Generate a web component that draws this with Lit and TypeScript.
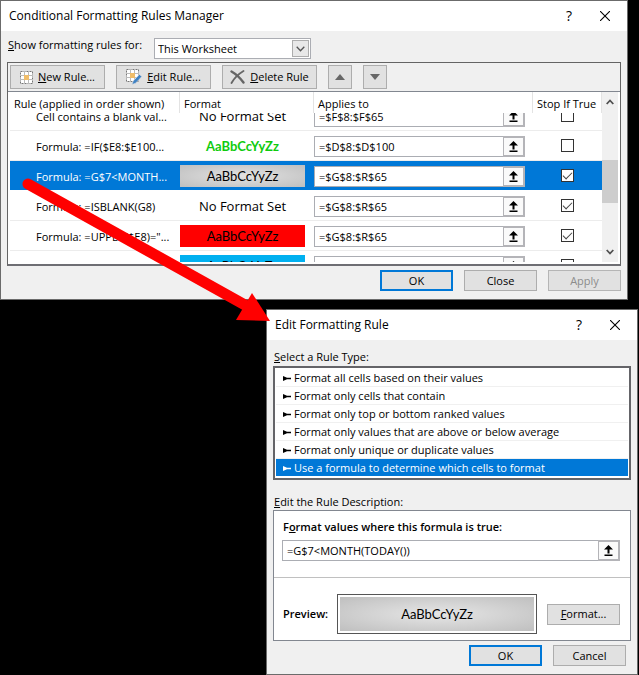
import { LitElement, html, css, svg, nothing } from "lit";
import { customElement, property } from "lit/decorators.js";
import { classMap } from "lit/directives/class-map.js";

const controls = css`
  :host {
    display: block;
    box-sizing: border-box;
    font: 11px/16px "Open Sans", "Noto Sans", sans-serif;
    color: #000;
  }
  *, *::before, *::after { box-sizing: border-box; }
  button, input, select { font: inherit; color: inherit; margin: 0; border-radius: 0; }
  .btn {
    height: 21px;
    width: 73px;
    padding: 0;
    border: 1px solid #adadad;
    background: #e1e1e1;
    display: flex;
    align-items: center;
    justify-content: center;
    white-space: nowrap;
  }
  .btn.primary { border: 2px solid #0078d7; }
  .btn:disabled { color: #8c8c8c; border-color: #b5b5b5; }
  .footer { display: flex; justify-content: flex-end; gap: 11px; }
`;

/** Window chrome: title bar with help and close, and a grey body. */
@customElement("dialog-window")
export class DialogWindow extends LitElement {
  @property() heading = "";

  static styles = [controls, css`
    :host { border: 1px solid #6b6b6b; background: #f0f0f0; }
    .bar {
      height: 30px;
      display: flex;
      align-items: center;
      background: #fff;
      padding: 0 8px;
    }
    h1 { flex: 1; margin: 0; font-size: 12px; font-weight: 400; line-height: 16px; }
    .tool {
      width: 36px;
      height: 28px;
      border: 0;
      padding: 0;
      background: none;
      display: grid;
      place-items: center;
      font-size: 14px;
    }
    .help { margin-right: 4px; }
    .close { width: 28px; }
    svg { width: 10px; height: 10px; }
  `];

  render() {
    return html`
      <header class="bar">
        <h1>${this.heading}</h1>
        <button class="tool help" aria-label="Help">?</button>
        <button class="tool close" aria-label="Close">
          <svg viewBox="0 0 10 10" stroke="#000" stroke-width="1.1"><path d="M0 0 10 10M10 0 0 10" /></svg>
        </button>
      </header>
      <slot></slot>
    `;
  }
}

/** Text field with a collapse button at its right end. */
@customElement("range-field")
export class RangeField extends LitElement {
  @property() value = "";
  @property() label = "";

  static styles = [controls, css`
    .field { display: flex; height: 21px; border: 1px solid #abadb3; background: #fff; color: #000; }
    input { flex: 1; min-width: 0; border: 0; padding: 0 0 0 4px; background: none; outline: 0; }
    button {
      width: 22px;
      padding: 0;
      border: 2px solid #b4b4b8;
      border-left-width: 1px;
      background: #fafafa;
      display: grid;
      place-items: center;
      margin: -1px;
    }
    svg { width: 9px; height: 11px; }
  `];

  render() {
    return html`
      <div class="field">
        <input type="text" aria-label=${this.label} .value=${this.value} />
        <button aria-label="Collapse dialog">
          <svg viewBox="0 0 9 11"><path d="M4.5 0 9 4.6H5.5V8.5H3.5V4.6H0ZM.5 9.6h8V11H.5Z" /></svg>
        </button>
      </div>
    `;
  }
}

interface Rule {
  text: string;
  format?: string;
  range: string;
  stop: boolean;
  selected?: boolean;
}

const rules: Rule[] = [
  { text: "Cell contains a blank val...", range: "=$F$8:$F$65", stop: false },
  { text: "Formula: =IF($E8:$E100...", format: "green", range: "=$D$8:$D$100", stop: false },
  { text: "Formula: =G$7<MONTH...", format: "grey", range: "=$G$8:$R$65", stop: true, selected: true },
  { text: "Formula: =ISBLANK(G8)", range: "=$G$8:$R$65", stop: true },
  { text: "Formula: =UPPER($E8)=\"...", format: "red", range: "=$G$8:$R$65", stop: true },
  { text: "Formula: =UPPER($E8)=\"...", format: "blue", range: "=$G$8:$R$65", stop: false },
];

const gridIcon = svg`
  <rect x=".5" y=".5" width="12" height="12" fill="#fff" stroke="#777" stroke-dasharray="2 1" />
  <path d="M4.5 0V13M8.5 0V13M0 4.5H13M0 8.5H13" stroke="#bbb" fill="none" />
  <rect x="4" y="4" width="5" height="5" fill="#f0bd6a" />`;

@customElement("rules-manager")
export class RulesManager extends LitElement {
  static styles = [controls, css`
    .body { padding: 7px 6px 8px; }
    .scope { display: flex; margin-bottom: 3px; }
    .scope label { width: 147px; padding-left: 1px; line-height: 14px; white-space: nowrap; }
    .combo { position: relative; width: 157px; height: 21px; }
    .combo select {
      appearance: none;
      width: 100%;
      height: 100%;
      padding: 0 20px 0 3px;
      border: 1px solid #abadb3;
      background: #fff;
    }
    .drop {
      position: absolute;
      top: 2px;
      right: 2px;
      width: 17px;
      height: 17px;
      border: 1px solid #adadad;
      background: #e8e8e8;
      pointer-events: none;
      display: grid;
      place-items: center;
    }
    .drop svg { width: 9px; height: 6px; }
    .frame { border: 1px solid #646464; border-bottom: 2px solid #6e6e73; }
    .toolbar { display: flex; gap: 11px; padding: 2px; height: 28px; }
    .toolbar .btn { height: 24px; width: 95px; gap: 5px; }
    .toolbar .move { width: 24px; }
    .toolbar svg { flex: none; }
    .list { display: flex; border-top: 1px solid #828790; background: #fff; padding: 0 2px 2px; height: 173px; }
    .view { flex: 1; min-width: 0; overflow: hidden; }
    table { width: 100%; table-layout: fixed; border-collapse: separate; border-spacing: 0; }
    th {
      position: sticky;
      top: 0;
      z-index: 1;
      height: 21px;
      padding: 3px 0 0 4px;
      background: #fff;
      border-right: 1px solid #e3e3e3;
      font-weight: 400;
      text-align: left;
      white-space: nowrap;
    }
    td { height: 30px; padding: 0; border-bottom: 1px solid #ececec; white-space: nowrap; }
    .c-rule { width: 170px; }
    .c-format { width: 134px; }
    .c-stop { width: 69px; }
    .text { padding: 2px 0 0 26px; }
    .applies { padding: 2px 8px 0 0; }
    .selected td { background: #0078d7; border-color: #fff; color: #fff; }
    .sample {
      width: 125px;
      height: 22px;
      font: 13px/22px Lato, sans-serif;
      text-align: center;
      color: #000;
    }
    .sample.none { font: 13px/22px "Open Sans", sans-serif; }
    .sample.green { color: #0fcb0f; font-weight: 700; }
    .grey { background: radial-gradient(closest-corner, #e2e2e2, #bfbfbf); }
    .red { background: #f00; }
    .blue { background: #00b0f0; }
    .stop { text-align: center; }
    .stop input {
      appearance: none;
      display: block;
      width: 13px;
      height: 13px;
      margin: 0 auto;
      border: 1px solid #333;
      background: #fff;
    }
    .stop input:checked::after {
      content: "";
      display: block;
      width: 9px;
      height: 5px;
      margin: 2px 1px;
      border: solid #444;
      border-width: 0 0 1px 1px;
      transform: rotate(-45deg);
    }
    .scroll { width: 16px; background: #f0f0f0; display: flex; flex-direction: column; }
    .scroll button { border: 0; padding: 0; background: none; height: 20px; display: grid; place-items: center; }
    .scroll svg { width: 8px; height: 6px; }
    .track { flex: 1; padding-top: 48px; }
    .thumb { height: 43px; background: #cdcdcd; }
    .footer { margin-top: 4px; }
  `];

  async firstUpdated() {
    const root = this.renderRoot;
    await root.querySelector<DialogWindow>("dialog-window")!.updateComplete;
    root.querySelector(".view")!.scrollTop = 12;
  }

  private row(r: Rule) {
    return html`
      <tr class=${classMap({ selected: !!r.selected })}>
        <td><div class="text">${r.text}</div></td>
        <td><div class="sample ${r.format ?? "none"}">${r.format ? "AaBbCcYyZz" : "No Format Set"}</div></td>
        <td class="applies"><range-field label="Applies to" .value=${r.range}></range-field></td>
        <td class="stop"><input type="checkbox" aria-label="Stop if true" .checked=${r.stop} /></td>
      </tr>`;
  }

  render() {
    return html`
      <dialog-window heading="Conditional Formatting Rules Manager">
        <div class="body">
          <div class="scope">
            <label for="scope"><u>S</u>how formatting rules for:</label>
            <div class="combo">
              <select id="scope"><option>This Worksheet</option></select>
              <span class="drop"><svg viewBox="0 0 9 6" fill="none" stroke="#555" stroke-width="1.3"><path d="M.7.8 4.5 4.8 8.3.8" /></svg></span>
            </div>
          </div>
          <div class="frame">
            <div class="toolbar">
              <button class="btn">
                <svg width="13" height="13" viewBox="0 0 13 13">${gridIcon}</svg>
                <span><u>N</u>ew Rule...</span>
              </button>
              <button class="btn">
                <svg width="16" height="16" viewBox="0 0 16 16">
                  ${gridIcon}
                  <path d="M6 15.5 7.2 12 13.4 5.4 15.8 7.6 9.6 14.2Z" fill="#3f82c4" stroke="#e1e1e1" stroke-width=".6" />
                </svg>
                <span><u>E</u>dit Rule...</span>
              </button>
              <button class="btn">
                <svg width="15" height="14" viewBox="0 0 15 14" fill="none" stroke="#666" stroke-linecap="round">
                  <path d="M1.5 1.5C6 4 10.5 8.5 13.5 12.5" stroke-width="2.4" />
                  <path d="M13.5 1C8.5 4 4 8.5 1.5 13" stroke-width="1.8" />
                </svg>
                <span><u>D</u>elete Rule</span>
              </button>
              <button class="btn move" aria-label="Move up">
                <svg width="10" height="6" viewBox="0 0 10 6"><path d="M5 0 10 6H0Z" fill="#666" /></svg>
              </button>
              <button class="btn move" aria-label="Move down">
                <svg width="10" height="6" viewBox="0 0 10 6"><path d="M0 0H10L5 6Z" fill="#666" /></svg>
              </button>
            </div>
            <div class="list">
              <div class="view">
                <table>
                  <thead>
                    <tr>
                      <th class="c-rule">Rule (applied in order shown)</th>
                      <th class="c-format">Format</th>
                      <th>Applies to</th>
                      <th class="c-stop">Stop If True</th>
                    </tr>
                  </thead>
                  <tbody>${rules.map((r) => this.row(r))}</tbody>
                </table>
              </div>
              <div class="scroll">
                <button aria-label="Scroll up"><svg viewBox="0 0 8 6" fill="none" stroke="#505050" stroke-width="1.8"><path d="M.7 5 4 1.5 7.3 5" /></svg></button>
                <div class="track"><div class="thumb"></div></div>
                <button aria-label="Scroll down"><svg viewBox="0 0 8 6" fill="none" stroke="#505050" stroke-width="1.8"><path d="M.7 1 4 4.5 7.3 1" /></svg></button>
              </div>
            </div>
          </div>
          <div class="footer">
            <button class="btn primary">OK</button>
            <button class="btn">Close</button>
            <button class="btn" disabled>Apply</button>
          </div>
        </div>
      </dialog-window>
    `;
  }
}

const ruleTypes = [
  "Format all cells based on their values",
  "Format only cells that contain",
  "Format only top or bottom ranked values",
  "Format only values that are above or below average",
  "Format only unique or duplicate values",
  "Use a formula to determine which cells to format",
];

@customElement("rule-editor")
export class RuleEditor extends LitElement {
  static styles = [controls, css`
    .body { padding: 9px 6px 8px; }
    .caption { margin: 0; padding-left: 1px; font-size: 11px; font-weight: 400; line-height: 16px; }
    .types {
      list-style: none;
      margin: 1px 0 14px;
      padding: 1px;
      border: 2px solid #646468;
      background: #fff;
    }
    .types li {
      height: 18px;
      display: flex;
      align-items: center;
      gap: 3px;
      padding: 1px 0 0 7px;
      border-bottom: 1px solid #f0f0f0;
      white-space: nowrap;
    }
    .types .current { background: #0078d7; color: #fff; border-color: #fff; }
    .types svg { width: 8px; height: 5px; fill: currentColor; }
    .panel { border: 1px solid #828790; background: #fff; }
    .formula { padding: 8px 10px 16px 8px; }
    .bold { font-weight: 600; }
    .formula .bold { margin: 0 0 5px; padding-left: 1px; }
    .preview {
      display: flex;
      align-items: center;
      gap: 10px;
      padding: 16px 10px 6px 9px;
      border-top: 1px solid #c0c0c0;
    }
    .preview .bold { width: 44px; white-space: nowrap; }
    .box { flex: 1; height: 40px; padding: 2px; border: 1px solid #555; }
    .swatch {
      height: 34px;
      font: 13px/34px Lato, sans-serif;
      text-align: center;
      background: radial-gradient(closest-corner, #e6e6e6, #bfbfbf);
    }
    .footer { margin: 4px 5px 0 0; }
  `];

  render() {
    return html`
      <dialog-window heading="Edit Formatting Rule">
        <div class="body">
          <h2 class="caption"><u>S</u>elect a Rule Type:</h2>
          <ul class="types" role="listbox" aria-label="Rule type">
            ${ruleTypes.map((t, i) => {
              const current = i === ruleTypes.length - 1;
              return html`
                <li role="option" aria-selected=${current} class=${current ? "current" : nothing}>
                  <svg viewBox="0 0 8 5"><path d="M0 0 4 1.7H8V3.3H4L0 5Z" /></svg>${t}
                </li>`;
            })}
          </ul>
          <h2 class="caption"><u>E</u>dit the Rule Description:</h2>
          <section class="panel">
            <div class="formula">
              <p class="bold">F<u>o</u>rmat values where this formula is true:</p>
              <range-field label="Format values where this formula is true" value="=G$7<MONTH(TODAY())"></range-field>
            </div>
            <div class="preview">
              <span class="bold">Preview:</span>
              <div class="box"><div class="swatch">AaBbCcYyZz</div></div>
              <button class="btn"><span><u>F</u>ormat...</span></button>
            </div>
          </section>
          <div class="footer">
            <button class="btn primary">OK</button>
            <button class="btn">Cancel</button>
          </div>
        </div>
      </dialog-window>
    `;
  }
}

@customElement("app-root")
export class AppRoot extends LitElement {
  static styles = css`
    :host { display: block; position: relative; min-height: 100vh; background: #000; overflow: hidden; }
    rules-manager { margin-right: 11px; }
    rule-editor { margin: 9px 1px 0 266px; }
    .pointer {
      position: absolute;
      top: 0;
      left: 0;
      width: 300px;
      height: 340px;
      pointer-events: none;
    }
  `;

  render() {
    return html`
      <rules-manager></rules-manager>
      <rule-editor></rule-editor>
      <svg class="pointer" viewBox="0 0 300 340" aria-hidden="true">
        <path d="M28 184 245 305" stroke="#f00" stroke-width="11" stroke-linecap="round" />
        <path d="M252 293 270 321 236 320Z" fill="#f00" />
      </svg>
    `;
  }
}
